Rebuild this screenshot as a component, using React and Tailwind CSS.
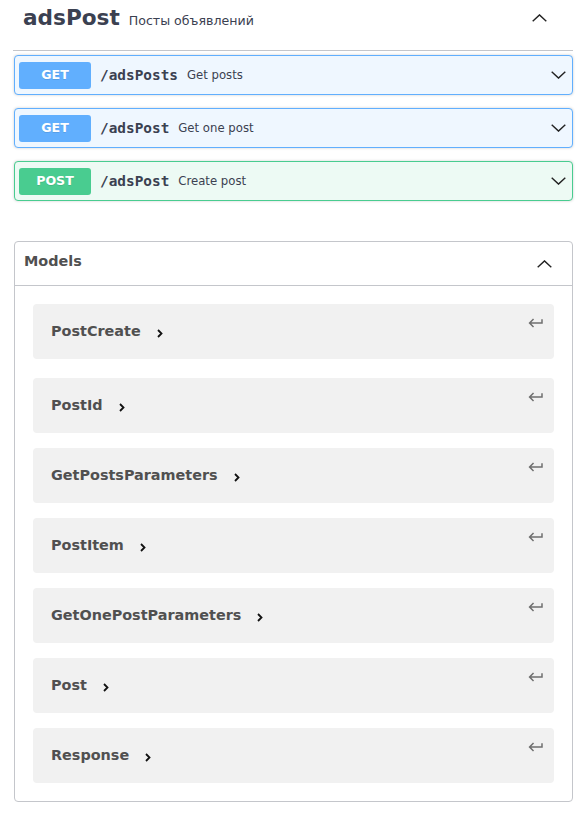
import React from 'react';

const sans = { fontFamily: '"DejaVu Sans", sans-serif' };
const mono = { fontFamily: '"DejaVu Sans Mono", monospace' };

const ops = [
    { method: 'GET', path: '/adsPosts', desc: 'Get posts' },
    { method: 'GET', path: '/adsPost', desc: 'Get one post' },
    { method: 'POST', path: '/adsPost', desc: 'Create post' },
];

const models = ['PostCreate', 'PostId', 'GetPostsParameters', 'PostItem', 'GetOnePostParameters', 'Post', 'Response'];

const Chevron = ({ up = false }) => (
    <svg width="15" height="8" viewBox="0 0 15 8" fill="none" stroke="#222" strokeWidth="1.4">
        <polyline points={up ? '0.7,7.3 7.5,0.9 14.3,7.3' : '0.7,0.7 7.5,7.1 14.3,0.7'} />
    </svg>
);

const JumpIcon = () => (
    <svg width="18" height="18" viewBox="0 0 24 24" fill="#6f6f6f">
        <path d="M19 7v4H5.83l3.58-3.59L8 6l-6 6 6 6 1.41-1.41L5.83 13H21V7z" />
    </svg>
);

const OpBlock = ({ method, path, desc }) => {
    const isGet = method === 'GET';
    return (
        <div
            className={`flex items-center h-[40px] mb-[13px] rounded-[4px] border pl-[4px] pr-[6px] shadow-[0_0_3px_rgba(0,0,0,0.19)] ${
                isGet ? 'bg-[#eff7ff] border-[#61affe]' : 'bg-[#edfaf4] border-[#49cc90]'
            }`}
        >
            <div
                className={`w-[72px] h-[27px] rounded-[3px] flex items-center justify-center text-white font-bold text-[12.6px] [text-shadow:0_1px_0_rgba(0,0,0,0.1)] ${
                    isGet ? 'bg-[#61affe]' : 'bg-[#49cc90]'
                }`}
                style={sans}
            >
                {method}
            </div>
            <span className="ml-[9px] mt-[1px] font-bold text-[14.4px] text-[#3b4151]" style={mono}>
                {path}
            </span>
            <span className="ml-[9px] mt-[1px] text-[11.7px] text-[#3b4151]" style={sans}>
                {desc}
            </span>
            <div className="ml-auto flex">
                <Chevron />
            </div>
        </div>
    );
};

const ModelItem = ({ name, first }) => (
    <div className={`relative h-[55px] rounded-[4px] bg-[#f1f1f1] flex items-center pl-[18px] ${first ? 'mb-[19px]' : 'mb-[15px]'} last:mb-0`}>
        <span className="font-bold text-[14.4px] text-[#505050] mt-[1px]" style={sans}>
            {name}
        </span>
        <svg className="ml-[16px] mt-[3px]" width="6" height="9" viewBox="0 0 6 9" fill="none" stroke="#111" strokeWidth="1.8">
            <polyline points="1,1 4.5,4.5 1,8" />
        </svg>
        <div className="absolute top-[10px] right-[9px]">
            <JumpIcon />
        </div>
    </div>
);

export default function App() {
    return (
        <div className="w-[584px] min-h-[817px] bg-white px-[14px] pr-[11px]" style={sans}>
            {/* Tag header */}
            <div className="h-[51px] border-b border-[#c4c6cb] -ml-[1px]">
                <div className="flex items-center h-[36px] pl-[10px] pr-[26px]">
                    <div className="flex items-baseline">
                        <span className="font-bold text-[21.6px] text-[#3b4151]">adsPost</span>
                        <span className="ml-[9px] text-[12.6px] text-[#3b4151]">Посты объявлений</span>
                    </div>
                    <div className="ml-auto flex">
                        <Chevron up />
                    </div>
                </div>
            </div>

            {/* Operations */}
            <div className="mt-[4px]">
                {ops.map((op, i) => (
                    <OpBlock key={i} {...op} />
                ))}
            </div>

            {/* Models */}
            <div className="mt-[40px] border border-[#c4c6cb] rounded-[4px]">
                <div className="h-[44px] border-b border-[#c4c6cb] flex items-center pl-[9px] pr-[20px]">
                    <span className="font-bold text-[14.4px] text-[#505050] -mt-[3px]">Models</span>
                    <div className="ml-auto flex">
                        <Chevron up />
                    </div>
                </div>
                <div className="px-[18px] pt-[18px] pb-[18px]">
                    {models.map((m, i) => (
                        <ModelItem key={m} name={m} first={i === 0} />
                    ))}
                </div>
            </div>
        </div>
    );
}
